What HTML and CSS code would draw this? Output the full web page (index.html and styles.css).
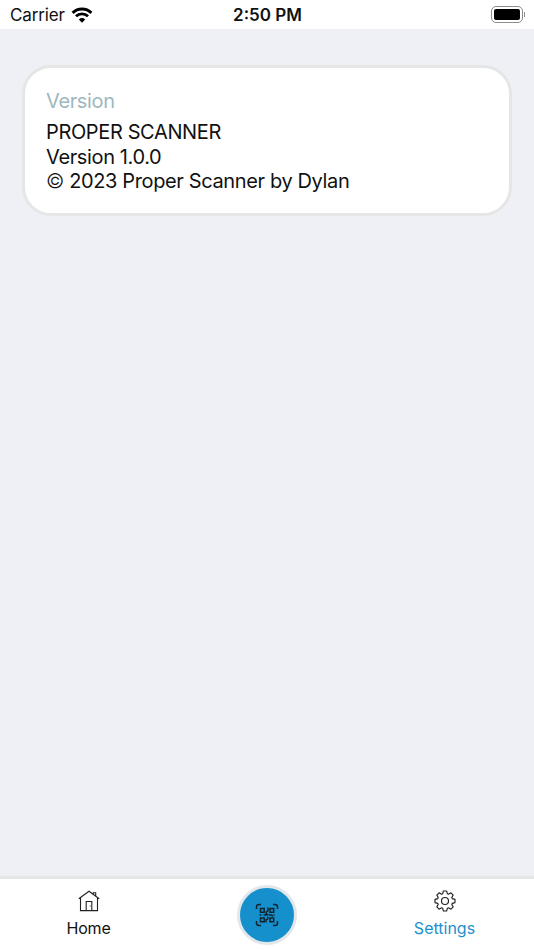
FILE: index.html
```
<!DOCTYPE html>
<html lang="en">
<head>
  <meta charset="UTF-8">
  <title>Proper Scanner</title>
  <meta name="viewport" content="width=device-width, initial-scale=1.0">
  <link rel="stylesheet" href="styles.css">
</head>
<body>
  <header class="status-bar">
    <div class="carrier">
      <span>Carrier</span>
      <svg class="wifi" width="22" height="16" viewBox="0 0 22 16">
        <path d="M1.6 5.9a13.4 13.4 0 0 1 18.8 0M5 9.3a8.6 8.6 0 0 1 12 0" fill="none" stroke="#000" stroke-width="2.9"/>
        <path d="M7.800 12.600a4.700 4.700 0 0 1 6.400 0L11 15.800z"/>
      </svg>
    </div>
    <div class="time">2:50 PM</div>
    <div class="battery">
      <div class="battery-body"><div class="battery-level"></div></div>
      <div class="battery-cap"></div>
    </div>
  </header>

  <main class="content">
    <section class="card">
      <h2>Version</h2>
      <p class="name">PROPER SCANNER</p>
      <p class="version">Version 1.0.0</p>
      <p class="copyright"><span class="copy">©</span> 2023 Proper Scanner by Dylan</p>
    </section>
  </main>

  <nav class="tabs">
    <a class="tab">
      <svg class="home-icon" width="22" height="22" viewBox="0 0 22 22" fill="none" stroke="#222" stroke-width="1.1">
        <path d="M.8 8.8 11 1.2l10.2 7.6M2.5 7.8v12.8h17V7.8M8.2 20.5v-9h5.6v9M15.3 4V2.7h2.4v3.2"/>
        <path d="M12.2 15.5v1" stroke-width=".8"/>
      </svg>
      <span class="home-label">Home</span>
    </a>
    <a class="tab">
      <span class="scan">
        <svg width="24" height="24" viewBox="0 0 24 24" fill="none" stroke="#102530" stroke-width="1.500">
          <path d="M1.500 6V4q0-2.500 2.500-2.500H6M18 1.500h2q2.500 0 2.500 2.500v2M22.500 18v2q0 2.500-2.500 2.500h-2M6 22.500H4q-2.500 0-2.500-2.500v-2"/>
          <path d="M5.500 5.500h3.700v3.700H5.500zM15 5.500h3.700v3.700H15zM5.500 15h3.700v3.700H5.500zM15 15h3.700v3.700H15z"/>
          <path d="M13 4.500v3.200l-1.800 1.500v2.600M4.500 12h2M8.500 12h3l2-1M14 12h2.500l1.500 1.300M12.800 13.500v2.300l-1.800 1v2.700M18.500 12h1"/>
        </svg>
      </span>
    </a>
    <a class="tab active">
      <svg width="22" height="22" viewBox="-11 -11 22 22" fill="none" stroke="#222" stroke-width="1.15" stroke-linejoin="round">
        <path d="M-2.400-7.200-1.600-10H1.600L2.400-7.200 3.390-6.790 5.940-8.200 8.200-5.940 6.790-3.390 7.200-2.400 10-1.600V1.600L7.200 2.400 6.790 3.390 8.200 5.940 5.940 8.200 3.390 6.790 2.400 7.200 1.600 10H-1.600L-2.400 7.200-3.390 6.790-5.940 8.200-8.200 5.940-6.790 3.390-7.200 2.400-10 1.600V-1.600L-7.200-2.400-6.790-3.390-8.200-5.940-5.940-8.200-3.390-6.790z"/>
        <circle r="3.500"/>
      </svg>
      <span>Settings</span>
    </a>
  </nav>
</body>
</html>
```

FILE: styles.css
```
* {
  box-sizing: border-box;
}

body {
  margin: 0;
  height: 100vh;
  display: flex;
  flex-direction: column;
  background: #eff0f5;
  color: #111;
  font-family: Inter, "Liberation Sans", sans-serif;
  overflow: hidden;
}

.status-bar {
  display: grid;
  grid-template-columns: 1fr auto 1fr;
  align-items: center;
  height: 29px;
  padding: 0 9px 0 10px;
  background: #fff;
  font-size: 17px;
  line-height: 29px;
}

.carrier {
  display: flex;
  align-items: center;
  gap: 6px;
  letter-spacing: -0.15px;
}

.carrier span {
  padding-top: 2px;
  line-height: 27px;
}

.time {
  padding-top: 2px;
  line-height: 27px;
  font-weight: 600;
}

.battery {
  display: flex;
  align-items: center;
  justify-content: flex-end;
  gap: 1px;
}

.battery-body {
  width: 32px;
  height: 17px;
  padding: 2px;
  border: 1px solid #8c8c8c;
  border-radius: 5px;
}

.battery-level {
  height: 100%;
  border-radius: 2px;
  background: #000;
}

.battery-cap {
  width: 1px;
  height: 5px;
  background: #8c8c8c;
}

.content {
  flex: 1;
  padding: 36px 22px;
}

.card {
  height: 151px;
  padding: 21px;
  border: 3px solid #e5e6e6;
  border-radius: 29px;
  background: #fff;
  font-size: 20px;
  line-height: 24.4px;
  letter-spacing: -0.37px;
}

.card h2 {
  margin: 0 0 7px;
  color: #9db7be;
  font-size: 20px;
  font-weight: 400;
}

.card p {
  margin: 0;
}

.copy {
  font-weight: 300;
}

.tabs {
  display: grid;
  grid-template-columns: repeat(3, 1fr);
  height: 74px;
  border-top: 3px solid #e5e6e6;
  background: #fff;
}

.tab {
  display: flex;
  flex-direction: column;
  align-items: center;
  padding-top: 11px;
  font-size: 16px;
  line-height: 20px;
}

.tab span {
  margin-top: 6px;
}

.home-label {
  padding-right: 1px;
  letter-spacing: -0.2px;
}

.tab .scan {
  display: flex;
  align-items: center;
  justify-content: center;
  width: 60px;
  height: 60px;
  margin-top: -5px;
  border: 3px solid #e2e7ea;
  border-radius: 50%;
  background: #1690cd;
}

.active {
  color: #1e90cc;
}

.active span {
  padding-right: 1px;
}
```
